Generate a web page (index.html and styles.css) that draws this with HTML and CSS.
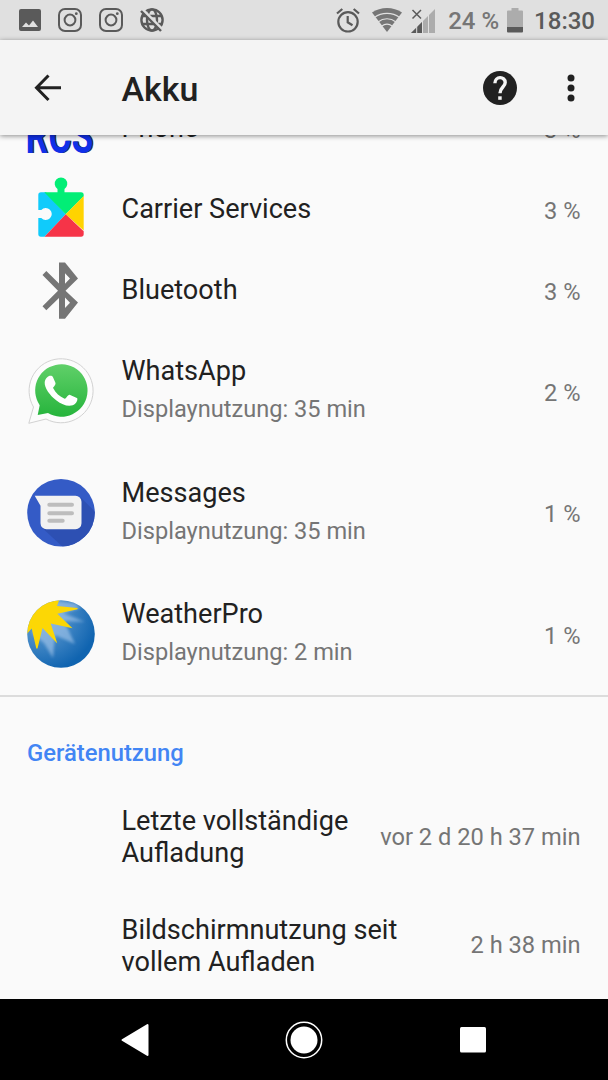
FILE: index.html
```
<!DOCTYPE html>
<html lang="de">
<head>
  <meta charset="UTF-8"/>
  <meta name="viewport" content="width=device-width, initial-scale=1.0"/>
  <title>Akku</title>
  <link rel="stylesheet" href="styles.css">
</head>
<body>
  <div class="screen">
    <!-- STATUS BAR -->
    <div class="status-bar">
      <div class="notifications">
        <svg width="22" height="22" viewBox="0 0 22 22"><path fill="#5a5a5a" fill-rule="evenodd" d="M2 0h18a2 2 0 0 1 2 2v18a2 2 0 0 1-2 2H2a2 2 0 0 1-2-2V2a2 2 0 0 1 2-2zM3 18h16l-5-6.5-4 5-3-3z"/></svg>
        <svg width="24" height="24" viewBox="0 0 24 24" fill="none" stroke="#5a5a5a" stroke-width="2"><rect x="1" y="1" width="22" height="22" rx="6"/><circle cx="12" cy="12" r="5.4"/><circle cx="18.3" cy="5.7" r="1.4" fill="#5a5a5a" stroke="none"/></svg>
        <svg width="24" height="24" viewBox="0 0 24 24" fill="none" stroke="#5a5a5a" stroke-width="2"><rect x="1" y="1" width="22" height="22" rx="6"/><circle cx="12" cy="12" r="5.4"/><circle cx="18.3" cy="5.7" r="1.4" fill="#5a5a5a" stroke="none"/></svg>
        <svg width="24" height="24" viewBox="0 0 24 24" fill="none" stroke="#5a5a5a" stroke-width="2.4"><circle cx="12" cy="12" r="10.6"/><ellipse cx="12" cy="12" rx="5" ry="10.6"/><path d="M2 8h20M2 16h20"/><path d="M1 0l23 23" stroke="#e0e0e0" stroke-width="3"/><path d="M1 3l20 20" /></svg>
      </div>
      <div class="system">
        <svg class="alarm" width="24" height="25" viewBox="0 0 24 25" fill="none" stroke="#5a5a5a" stroke-width="2.200"><circle cx="12" cy="13.8" r="9.7"/><path d="M1 5.5L6.3 1M23 5.5L17.7 1M11.7 8v6.3l4.8 2.9"/></svg>
        <svg class="wifi" width="30" height="24" viewBox="0 0 30 24"><path fill="#767676" d="M0 4.6C8.5-1.5 21.500-1.500 30 4.600L15 24z"/><path fill="none" stroke="#e0e0e0" stroke-width="1.100" d="M2.500 9.400C9.500 4 20.500 4 27.500 9.400M6 14C11.500 9.700 18.500 9.700 24 14M9.500 18.300C13 15.600 17 15.600 20.500 18.300"/></svg>
        <svg class="signal" width="24" height="25" viewBox="0 0 24 25"><path fill="#acacac" d="M0 25L24 1v24z"/><path fill="#5a5a5a" d="M0 25L11 14v11z"/><path stroke="#e0e0e0" d="M5.700 12v13M11.500 10v15M17.500 4v21"/><path stroke="#5a5a5a" stroke-width="1.500" d="M1.500 2l8.500 8.500M10 2L1.500 10.500"/></svg>
        <span class="charge">24 %</span>
        <svg class="battery" width="16" height="25" viewBox="0 0 16 25"><path fill="#acacac" d="M1 2.500h3.500V0h7v2.500H15a1 1 0 0 1 1 1V19H0V3.500a1 1 0 0 1 1-1z"/><path fill="#5a5a5a" d="M0 19h16v4.500a1 1 0 0 1-1 1H1a1 1 0 0 1-1-1z"/></svg>
        <span class="clock">18:30</span>
      </div>
    </div>

    <!-- APP BAR -->
    <div class="app-bar">
      <svg class="back" width="28" height="28" viewBox="0 0 28 28"><path fill="none" stroke="#212121" stroke-width="3" d="M14.500 1.500L2.500 13.800l12 12.200M2.500 13.800H27"/></svg>
      <div class="title">Akku</div>
      <svg class="help" width="34" height="34" viewBox="0 0 34 34"><circle cx="17" cy="17" r="17" fill="#212121"/><path fill="none" stroke="#f4f4f4" stroke-width="3.400" d="M11.900 12.300C11.900 4.800 22.200 5 22.200 11.500C22.200 16 17 16.300 17 22.300"/><path fill="#f4f4f4" d="M15.200 25.300h3.500v3.500h-3.500z"/></svg>
      <svg class="more" width="8" height="28" viewBox="0 0 8 28" fill="#212121"><circle cx="4" cy="4" r="3.500"/><circle cx="4" cy="14" r="3.500"/><circle cx="4" cy="24" r="3.500"/></svg>
    </div>

    <!-- APP LIST -->
    <div class="content">
      <div class="row">
        <svg class="icon" viewBox="0 0 68 68"><text class="rcs rcs-shadow" x="-0.500" y="59.300" textLength="68" lengthAdjust="spacingAndGlyphs">RCS</text><text class="rcs" x="-1.500" y="58.500" textLength="68" lengthAdjust="spacingAndGlyphs">RCS</text></svg>
        <div class="text"><div class="name">Phone</div></div>
        <div class="value">3 %</div>
      </div>
      <div class="row">
        <svg class="icon" viewBox="0 0 68 68">
          <path fill="#10cbfb" d="M14 17.300h5l19.700 22L17.500 61.700H14a2.700 2.700 0 0 1-2.700-2.700V43h3a6 6 0 1 0 0-8h-3V20a2.700 2.700 0 0 1 2.700-2.700z"/>
          <path fill="#02ee76" d="M17.300 17.300H30.500V14a6.300 6.300 0 1 1 7 0v3.300H54a2.700 2.700 0 0 1 2.700 2.700v1.200l-18 18.100z"/>
          <path fill="#ffd300" d="M56.700 21v34.500L38.700 39.300z"/>
          <path fill="#f63448" d="M17.500 61.700l21.200-22.400 18 17V59a2.700 2.700 0 0 1-2.700 2.700z"/>
        </svg>
        <div class="text"><div class="name">Carrier Services</div></div>
        <div class="value">3 %</div>
      </div>
      <div class="row">
        <svg class="icon" viewBox="0 0 68 68"><path fill="#757575" fill-rule="evenodd" d="M32 6.500h6l13 16-12.500 12.200L51 46.500l-13 16.200h-6V42L19.300 54.300l-3.800-4L31 34.700 15.500 19l3.800-4L32 27.500zM38 17.300v10.400l5-5.200zM38 41.500V52l5-5.300z"/></svg>
        <div class="text"><div class="name">Bluetooth</div></div>
        <div class="value">3 %</div>
      </div>
      <div class="row tall">
        <svg class="icon" viewBox="0 0 68 68">
          <defs><linearGradient id="green" x2="0" y2="1"><stop stop-color="#60d069"/><stop offset="1" stop-color="#26b43c"/></linearGradient></defs>
          <path fill="#fcfcfc" stroke="#d2d2d2" d="M1.800 66.300L6.500 50A32 32 0 1 1 19 62z"/>
          <path fill="url(#green)" d="M10.700 58l2-9.800A26.200 26.200 0 1 1 21 56z"/>
          <path fill="#fff" d="M20.500 20c2-2 4.700-1.600 5.400 0l2.500 5.800c.8 2-2.200 4.200-2.300 5.200 2.500 5 6.500 8.500 11.500 10.700 1.600.2 3-4.200 5-4l7.300 3.400c1.200.7 0 4-1.300 5.200C44 51 36 48.500 29.500 43.500 23 38.500 17.300 31 17.700 25.200c.2-2 1.300-3.900 2.800-5.200z"/>
        </svg>
        <div class="text"><div class="name">WhatsApp</div><div class="usage">Displaynutzung: 35 min</div></div>
        <div class="value">2 %</div>
      </div>
      <div class="row tall">
        <svg class="icon" viewBox="0 -0.700 68 68">
          <defs><clipPath id="disc"><circle cx="34" cy="34" r="33.800"/></clipPath></defs>
          <circle cx="34" cy="34" r="33.800" fill="#345bc6"/>
          <path clip-path="url(#disc)" fill="#2d50b3" d="M54 19l20 20v35H42L15 49z"/>
          <path fill="#f2f2f2" d="M7.700 17H48.500a6 6 0 0 1 6 6v21.500a6 6 0 0 1-6 6h-29a6 6 0 0 1-6-6V27z"/>
          <path stroke="#bdbdbd" stroke-width="4" stroke-linecap="round" d="M22.300 26H45M22.300 34.500H45M22.300 42h13.400"/>
        </svg>
        <div class="text"><div class="name">Messages</div><div class="usage">Displaynutzung: 35 min</div></div>
        <div class="value">1 %</div>
      </div>
      <div class="row tall">
        <svg class="icon" viewBox="0 0 68 68">
          <defs>
            <radialGradient id="sky" cx="0.200" cy="0.200" r="0.850"><stop stop-color="#6fa5d8"/><stop offset="0.500" stop-color="#4388c6"/><stop offset="1" stop-color="#1064b0"/></radialGradient>
            <filter id="soft"><feGaussianBlur stdDeviation="1.500"/></filter>
            <clipPath id="globe"><circle cx="34" cy="34" r="33.800"/></clipPath>
          </defs>
          <g clip-path="url(#globe)">
            <path fill="url(#sky)" d="M0 0h68v68H0z"/>
            <path filter="url(#soft)" fill="#a9c9ec" opacity="0.600" d="M30 1l18 2 6 5-18 5 22 9-21-1 11 23-20-9-2 23-9-15-12-10z"/>
            <path fill="#fcd705" d="M-2-2h35l-3 8 20.500 2v1.200L30.300 13.800 45.500 28.300 23.700 23.500l6.600 20L15.500 28l-5 20.500H9.300L4.700 28.500-2 36z"/>
          </g>
        </svg>
        <div class="text"><div class="name">WeatherPro</div><div class="usage">Displaynutzung: 2 min</div></div>
        <div class="value">1 %</div>
      </div>

      <!-- DEVICE USAGE -->
      <div class="section-title">Gerätenutzung</div>
      <div class="row detail">
        <div class="text"><div class="name">Letzte vollständige Aufladung</div></div>
        <div class="value">vor 2 d 20 h 37 min</div>
      </div>
      <div class="row detail">
        <div class="text"><div class="name">Bildschirmnutzung seit vollem Aufladen</div></div>
        <div class="value">2 h 38 min</div>
      </div>
    </div>

    <!-- NAVIGATION -->
    <div class="nav-bar">
      <svg width="30" height="34" viewBox="0 0 30 34"><path fill="#fff" stroke="#fff" stroke-width="2" stroke-linejoin="round" d="M2.500 17L27.500 2v30z"/></svg>
      <svg width="38" height="38" viewBox="0 0 38 38"><circle cx="19" cy="19" r="17.700" fill="none" stroke="#fff" stroke-width="1.500"/><circle cx="19" cy="19" r="13.500" fill="#fff"/></svg>
      <svg width="26" height="26" viewBox="0 0 26 26"><rect width="26" height="25.500" rx="1.500" fill="#fff"/></svg>
    </div>
  </div>
</body>
</html>
```
FILE: styles.css
```
body {
  margin: 0;
  font-family: Roboto, sans-serif;
  color: #212121;
  background: #fafafa;
}
svg {
  display: block;
  flex-shrink: 0;
}
.screen {
  display: flex;
  flex-direction: column;
  width: 608px;
  height: 1080px;
  overflow: hidden;
}

/* STATUS BAR */
.status-bar {
  display: flex;
  justify-content: space-between;
  box-sizing: border-box;
  height: 40px;
  padding: 0 13px 0 19px;
  background: #e0e0e0;
  flex-shrink: 0;
}
.notifications,
.system {
  display: flex;
  align-items: center;
}
.notifications {
  gap: 17px;
}
.wifi {
  margin-left: 12px;
}
.signal {
  margin: 0 13px 0 9px;
}
.charge,
.clock {
  font-size: 24px;
  font-weight: 500;
  line-height: 28px;
  padding-top: 2px;
  white-space: nowrap;
}
.charge {
  color: #767676;
}
.battery {
  margin: 0 11px 0 8px;
}
.clock {
  color: #5a5a5a;
}

/* APP BAR */
.app-bar {
  display: flex;
  align-items: center;
  box-sizing: border-box;
  height: 95px;
  padding: 0 33px 0 34px;
  background: #f4f4f4;
  box-shadow: 0 1px 5px rgba(0,0,0,0.45);
  flex-shrink: 0;
  z-index: 1;
}
.title {
  flex: 1;
  margin-left: 59.5px;
  padding-top: 2px;
  font-size: 34px;
  font-weight: 500;
}
.more {
  margin-left: 50px;
}

/* LIST */
.content {
  flex: 1;
  min-height: 0;
  overflow: hidden;
}
.row {
  display: flex;
  align-items: center;
  box-sizing: border-box;
  height: 81px;
  padding: 0 27.5px 0 27px;
}
.row:first-child {
  margin-top: -48px;
}
.row.tall {
  height: 121.5px;
}
.icon {
  width: 68px;
  height: 68px;
  margin-right: 26.5px;
  overflow: visible;
}
.text {
  flex: 1;
}
.tall .text {
  padding-bottom: 1.5px;
}
.name {
  font-size: 27.1px;
  line-height: 32px;
}
.usage {
  margin-top: 6px;
  font-size: 23.6px;
  line-height: 32px;
  color: #757575;
}
.value {
  padding-top: 4px;
  font-size: 23.65px;
  color: #757575;
  white-space: nowrap;
}
.rcs {
  font-size: 50px;
  font-weight: 700;
  fill: #1030e8;
}
.rcs-shadow {
  fill: #333;
}

.section-title {
  height: 84px;
  border-top: 2px solid #dcdcdc;
  padding-left: 27px;
  font-size: 23.8px;
  font-weight: 500;
  line-height: 112px;
  color: #4285f4;
}
.row.detail {
  height: 108.5px;
  padding-left: 121.5px;
}
.detail .text {
  padding: 5px 20px 0 0;
}

/* NAVIGATION */
.nav-bar {
  display: flex;
  align-items: center;
  justify-content: space-between;
  box-sizing: border-box;
  height: 81px;
  padding: 0 122px 0 120px;
  background: #000;
  flex-shrink: 0;
}
.nav-bar svg:nth-child(2) {
  margin-right: 2px;
}
```
